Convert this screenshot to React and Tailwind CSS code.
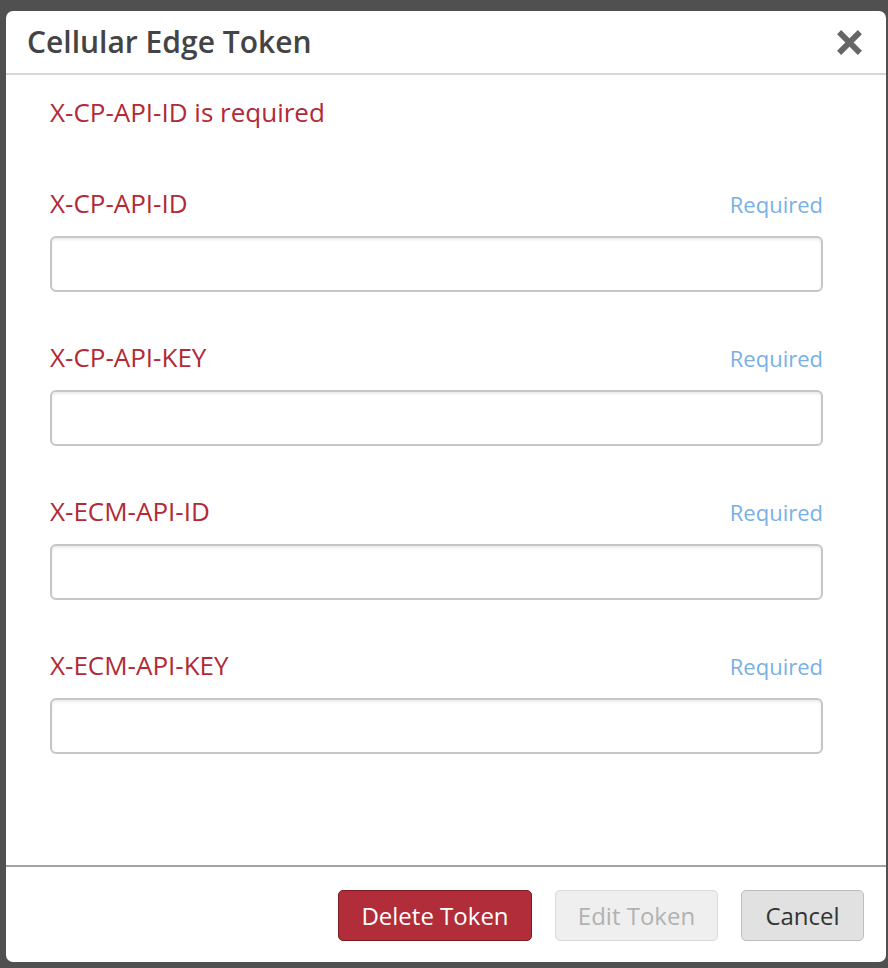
import React from "react";

const fields = ["X-CP-API-ID", "X-CP-API-KEY", "X-ECM-API-ID", "X-ECM-API-KEY"];

const App = () => {
  return (
    <div
      className="w-[888px] h-[968px] bg-[#505050] pt-[11px] pl-[6px]"
      style={{ fontFamily: '"Open Sans", "Liberation Sans", sans-serif' }}
    >
      <div className="w-[880px] h-[951px] bg-white rounded-[7px] flex flex-col overflow-hidden">
        {/* Header */}
        <div className="h-[64px] flex items-center justify-between pl-[21px] pr-[22px] border-b-2 border-[#d6d6d6]">
          <h2 className="text-[30px] font-semibold text-[#444444] leading-none">Cellular Edge Token</h2>
          <button className="w-[30px] h-[30px] flex items-center justify-center">
            <svg viewBox="0 0 26 26" className="w-[27px] h-[27px]">
              <path d="M3 3L23 23M23 3L3 23" stroke="#666666" strokeWidth="5.5" strokeLinecap="butt" />
            </svg>
          </button>
        </div>

        {/* Body */}
        <div className="flex-1 pl-[44px] pr-[63px] pt-[21px]">
          <p className="text-[26px] leading-[32px] text-[#b12a36]">X-CP-API-ID is required</p>
          {fields.map((f, i) => (
            <div key={f} className={i === 0 ? "mt-[59px]" : "mt-[49px]"}>
              <div className="flex items-baseline justify-between h-[32px] mb-[17px]">
                <label className="text-[26px] leading-[32px] text-[#b12a36]">{f}</label>
                <span className="text-[22px] leading-[32px] text-[#78b0e6]">Required</span>
              </div>
              <input
                type="text"
                className="block w-full h-[56px] rounded-[6px] border-2 border-[#c6c6c6] shadow-[inset_0_2px_3px_rgba(0,0,0,0.08)] outline-none"
              />
            </div>
          ))}
        </div>

        {/* Footer */}
        <div className="border-t-2 border-[#a3a3a3] h-[97px] flex justify-end items-start pt-[23px] pr-[22px] gap-[23px]">
          <button className="w-[194px] h-[51px] rounded-[5px] bg-[#b22d3a] border border-[#7f1d27] text-white text-[24px]">
            Delete Token
          </button>
          <button className="w-[163px] h-[51px] rounded-[5px] bg-[#efefef] border border-[#d9d9d9] text-[#b2b2b2] text-[24px]">
            Edit Token
          </button>
          <button className="w-[123px] h-[51px] rounded-[5px] bg-[#e1e1e1] border border-[#bdbdbd] text-[#333333] text-[24px]">
            Cancel
          </button>
        </div>
      </div>
    </div>
  );
};

export default App;
